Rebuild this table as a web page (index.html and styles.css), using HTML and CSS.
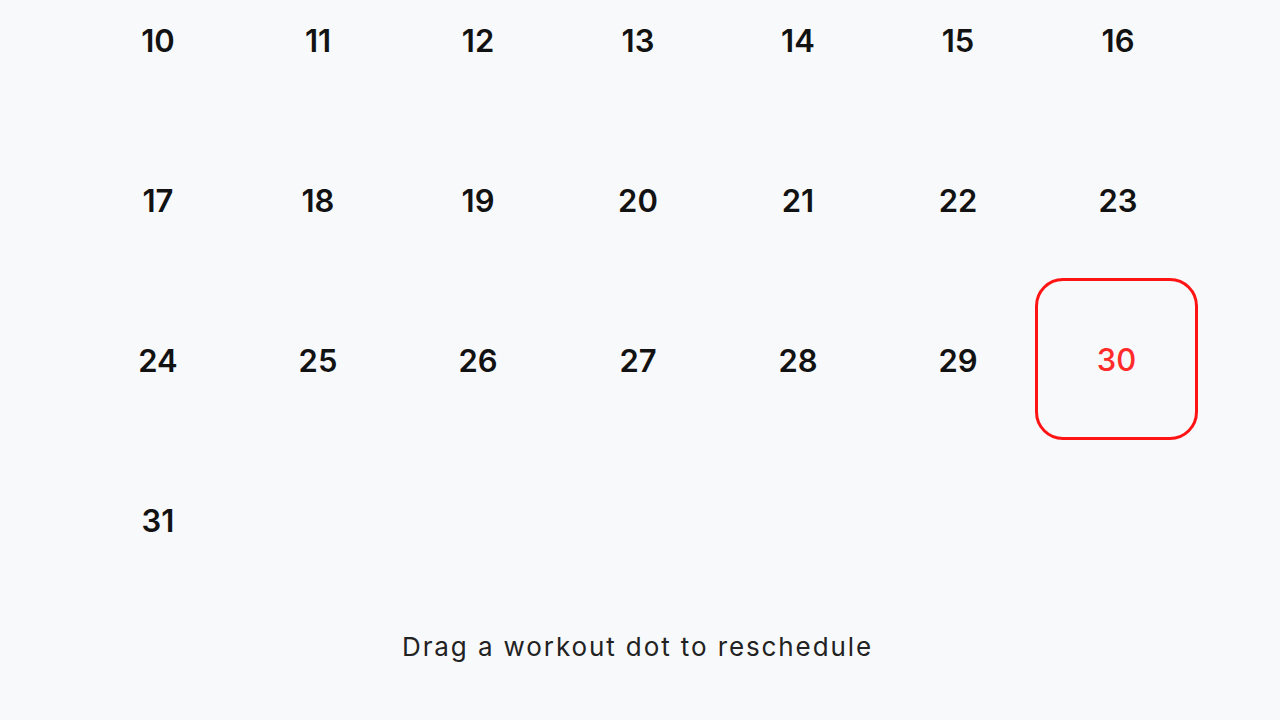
FILE: index.html
```html
<!DOCTYPE html>
<html lang="en">
<head>
<meta charset="utf-8">
<title>Calendar</title>
<link rel="stylesheet" href="styles.css">
</head>
<body>
<main class="calendar">
  <div class="grid">
    <div class="day">10</div><div class="day">11</div><div class="day">12</div><div class="day">13</div><div class="day">14</div><div class="day">15</div><div class="day">16</div>
    <div class="day">17</div><div class="day">18</div><div class="day">19</div><div class="day">20</div><div class="day">21</div><div class="day">22</div><div class="day">23</div>
    <div class="day">24</div><div class="day">25</div><div class="day">26</div><div class="day">27</div><div class="day">28</div><div class="day">29</div><div class="day today">30</div>
    <div class="day">31</div>
  </div>
  <p class="hint">Drag a workout dot to reschedule</p>
</main>
</body>
</html>
```
FILE: styles.css
```css
html, body {
  margin: 0;
  padding: 0;
  background: #f8f9fb;
  height: 100%;
  overflow: hidden;
}
body {
  font-family: Inter, "Noto Sans", sans-serif;
  color: #111;
}
.calendar {
  display: flex;
  flex-direction: column;
  align-items: center;
  margin-top: -40px;
}
.grid {
  display: grid;
  grid-template-columns: repeat(7, 160px);
  grid-auto-rows: 160px;
  margin-left: -4px;
}
.day {
  display: flex;
  align-items: center;
  justify-content: center;
  font-size: 31px;
  font-weight: 600;
  color: #121212;
  box-sizing: border-box;
}
.today {
  color: #ff2b2b;
  font-weight: 500;
  border: 3px solid #ff1414;
  border-radius: 28px;
  margin: -2px 0 0 -3px;
}
.hint {
  margin: 31px 0 0 -5px;
  font-size: 26px;
  line-height: 32px;
  letter-spacing: 1.9px;
  color: #222;
  font-weight: 400;
}
```
